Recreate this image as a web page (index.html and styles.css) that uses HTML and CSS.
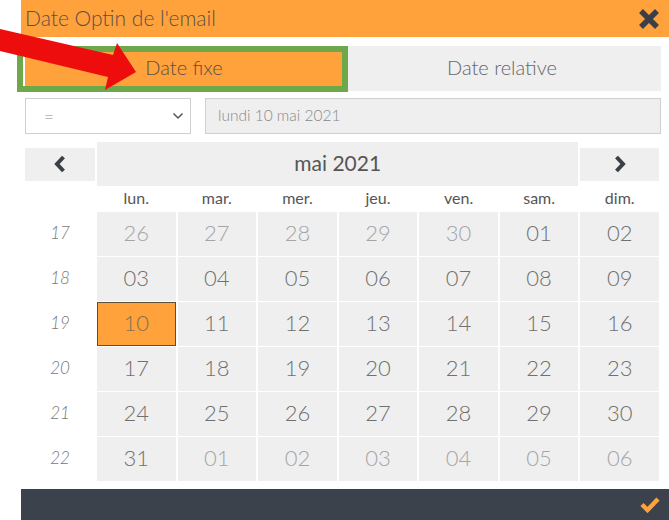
FILE: index.html
```html
<!DOCTYPE html>
<html lang="fr">
<head>
<meta charset="utf-8">
<title>Date Optin de l'email</title>
<link rel="stylesheet" href="styles.css">
</head>
<body>
<div class="dialog">
  <div class="header">
    <span class="title">Date Optin de l'email</span>
    <svg class="close" width="22" height="22" viewBox="0 0 22 22"><path d="M3 3 L19 19 M19 3 L3 19" stroke="#3b4048" stroke-width="5.5" stroke-linecap="butt"/></svg>
  </div>
  <div class="content">
    <div class="tabs">
      <div class="tab active">Date fixe</div>
      <div class="tab">Date relative</div>
    </div>
    <div class="inputs">
      <div class="select"><span class="eq">=</span>
        <svg width="12" height="8" viewBox="0 0 12 8"><path d="M1.5 1.5 L6 6 L10.5 1.5" fill="none" stroke="#555" stroke-width="1.5"/></svg>
      </div>
      <div class="dateinput">lundi 10 mai 2021</div>
    </div>
    <div class="calendar">
      <div class="nav prev"><svg width="14" height="18" viewBox="0 0 14 18"><path d="M10.5 2 L4 9 L10.5 16" fill="none" stroke="#3b4048" stroke-width="4"/></svg></div>
      <div class="month">mai 2021</div>
      <div class="nav next"><svg width="14" height="18" viewBox="0 0 14 18"><path d="M3.5 2 L10 9 L3.5 16" fill="none" stroke="#3b4048" stroke-width="4"/></svg></div>

      <div class="dow blank"></div>
      <div class="dow">lun.</div><div class="dow">mar.</div><div class="dow">mer.</div><div class="dow">jeu.</div><div class="dow">ven.</div><div class="dow">sam.</div><div class="dow">dim.</div>

      <div class="wk">17</div>
      <div class="day out">26</div><div class="day out">27</div><div class="day out">28</div><div class="day out">29</div><div class="day out">30</div><div class="day">01</div><div class="day">02</div>
      <div class="wk">18</div>
      <div class="day">03</div><div class="day">04</div><div class="day">05</div><div class="day">06</div><div class="day">07</div><div class="day">08</div><div class="day">09</div>
      <div class="wk">19</div>
      <div class="day selected">10</div><div class="day">11</div><div class="day">12</div><div class="day">13</div><div class="day">14</div><div class="day">15</div><div class="day">16</div>
      <div class="wk">20</div>
      <div class="day">17</div><div class="day">18</div><div class="day">19</div><div class="day">20</div><div class="day">21</div><div class="day">22</div><div class="day">23</div>
      <div class="wk">21</div>
      <div class="day">24</div><div class="day">25</div><div class="day">26</div><div class="day">27</div><div class="day">28</div><div class="day">29</div><div class="day">30</div>
      <div class="wk">22</div>
      <div class="day">31</div><div class="day out">01</div><div class="day out">02</div><div class="day out">03</div><div class="day out">04</div><div class="day out">05</div><div class="day out">06</div>
    </div>
  </div>
  <div class="footer">
    <svg width="20" height="17" viewBox="0 0 20 17"><path d="M2 8.5 L7.5 14 L18 3" fill="none" stroke="#ffa23b" stroke-width="4.5"/></svg>
  </div>
</div>
<div class="highlight"></div>
<svg class="arrow" width="140" height="95" viewBox="0 0 140 95"><polygon points="0,29 113,55 117,43 136,72 105,90 108,77 0,51" fill="#ee0d0d"/></svg>
</body>
</html>
```
FILE: styles.css
```css
html, body {
  margin: 0;
  padding: 0;
  background: #fff;
}
body {
  font-family: "Lato", "Liberation Sans", sans-serif;
  font-weight: 300;
  color: #666;
  width: 669px;
  height: 520px;
  overflow: hidden;
  position: relative;
}
.dialog {
  margin-left: 21px;
  width: 648px;
  display: flex;
  flex-direction: column;
}
.header {
  height: 37px;
  background: #ffa23b;
  display: flex;
  align-items: center;
  justify-content: space-between;
  padding: 0 9px 0 4px;
}
.title {
  font-size: 21px;
  color: #5b5048;
  margin-top: -2px;
}
.close {
  margin-top: 1px;
}
.content {
  padding: 9px 8px 0 4px;
}
.tabs {
  display: flex;
  height: 45px;
}
.tab {
  flex: 1;
  display: flex;
  align-items: center;
  justify-content: center;
  background: #efefef;
  font-size: 20px;
  color: #666;
  padding-bottom: 4px;
  box-sizing: border-box;
}
.tab.active {
  background: #ffa23b;
  color: #5b5048;
}
.inputs {
  display: flex;
  gap: 14px;
  margin-top: 7px;
  height: 36px;
}
.select {
  width: 166px;
  box-sizing: border-box;
  border: 1px solid #cfcfcf;
  background: #fff;
  display: flex;
  align-items: center;
  justify-content: space-between;
  padding: 0 6px 0 18px;
}
.eq {
  font-size: 17px;
  color: #888;
}
.dateinput {
  flex: 1;
  box-sizing: border-box;
  border: 1px solid #cfcfcf;
  background: #efefef;
  display: flex;
  align-items: center;
  padding-left: 12px;
  padding-bottom: 2px;
  font-size: 15.5px;
  color: #888;
}
.calendar {
  margin-top: 8px;
  margin-right: 2px;
  display: grid;
  grid-template-columns: 70px repeat(7, 1fr);
  grid-template-rows: 44px 24px repeat(6, 44px);
  column-gap: 2px;
  row-gap: 1px;
}
.nav {
  align-self: center;
  height: 33px;
  background: #efefef;
  display: flex;
  align-items: center;
  justify-content: center;
}
.month {
  grid-column: 2 / 8;
  background: #efefef;
  display: flex;
  align-items: center;
  justify-content: center;
  font-size: 21px;
  color: #555;
  font-weight: 400;
  padding-bottom: 4px;
  box-sizing: border-box;
}
.dow {
  display: flex;
  align-items: center;
  justify-content: center;
  font-size: 16px;
  color: #555;
  font-weight: 400;
  padding-bottom: 4px;
  box-sizing: border-box;
}
.wk {
  display: flex;
  align-items: center;
  justify-content: center;
  font-style: italic;
  font-size: 17px;
  color: #777;
  padding-bottom: 4px;
  box-sizing: border-box;
}
.day {
  background: #efefef;
  display: flex;
  align-items: center;
  justify-content: center;
  font-size: 22px;
  color: #707070;
  padding-bottom: 4px;
  box-sizing: border-box;
}
.day.out {
  color: #a5a5a5;
}
.day.selected {
  background: #ffa23b;
  border: 1px solid #5f4f35;
  color: #84704f;
}
.footer {
  margin-top: 8px;
  height: 31px;
  background: #3c424c;
  display: flex;
  align-items: center;
  justify-content: flex-end;
  padding-right: 9px;
}
.highlight {
  position: absolute;
  left: 17px;
  top: 46px;
  width: 331px;
  height: 46px;
  box-sizing: border-box;
  border: 6px solid #6fa84a;
}
.arrow {
  position: absolute;
  left: 0;
  top: 0;
}
```
